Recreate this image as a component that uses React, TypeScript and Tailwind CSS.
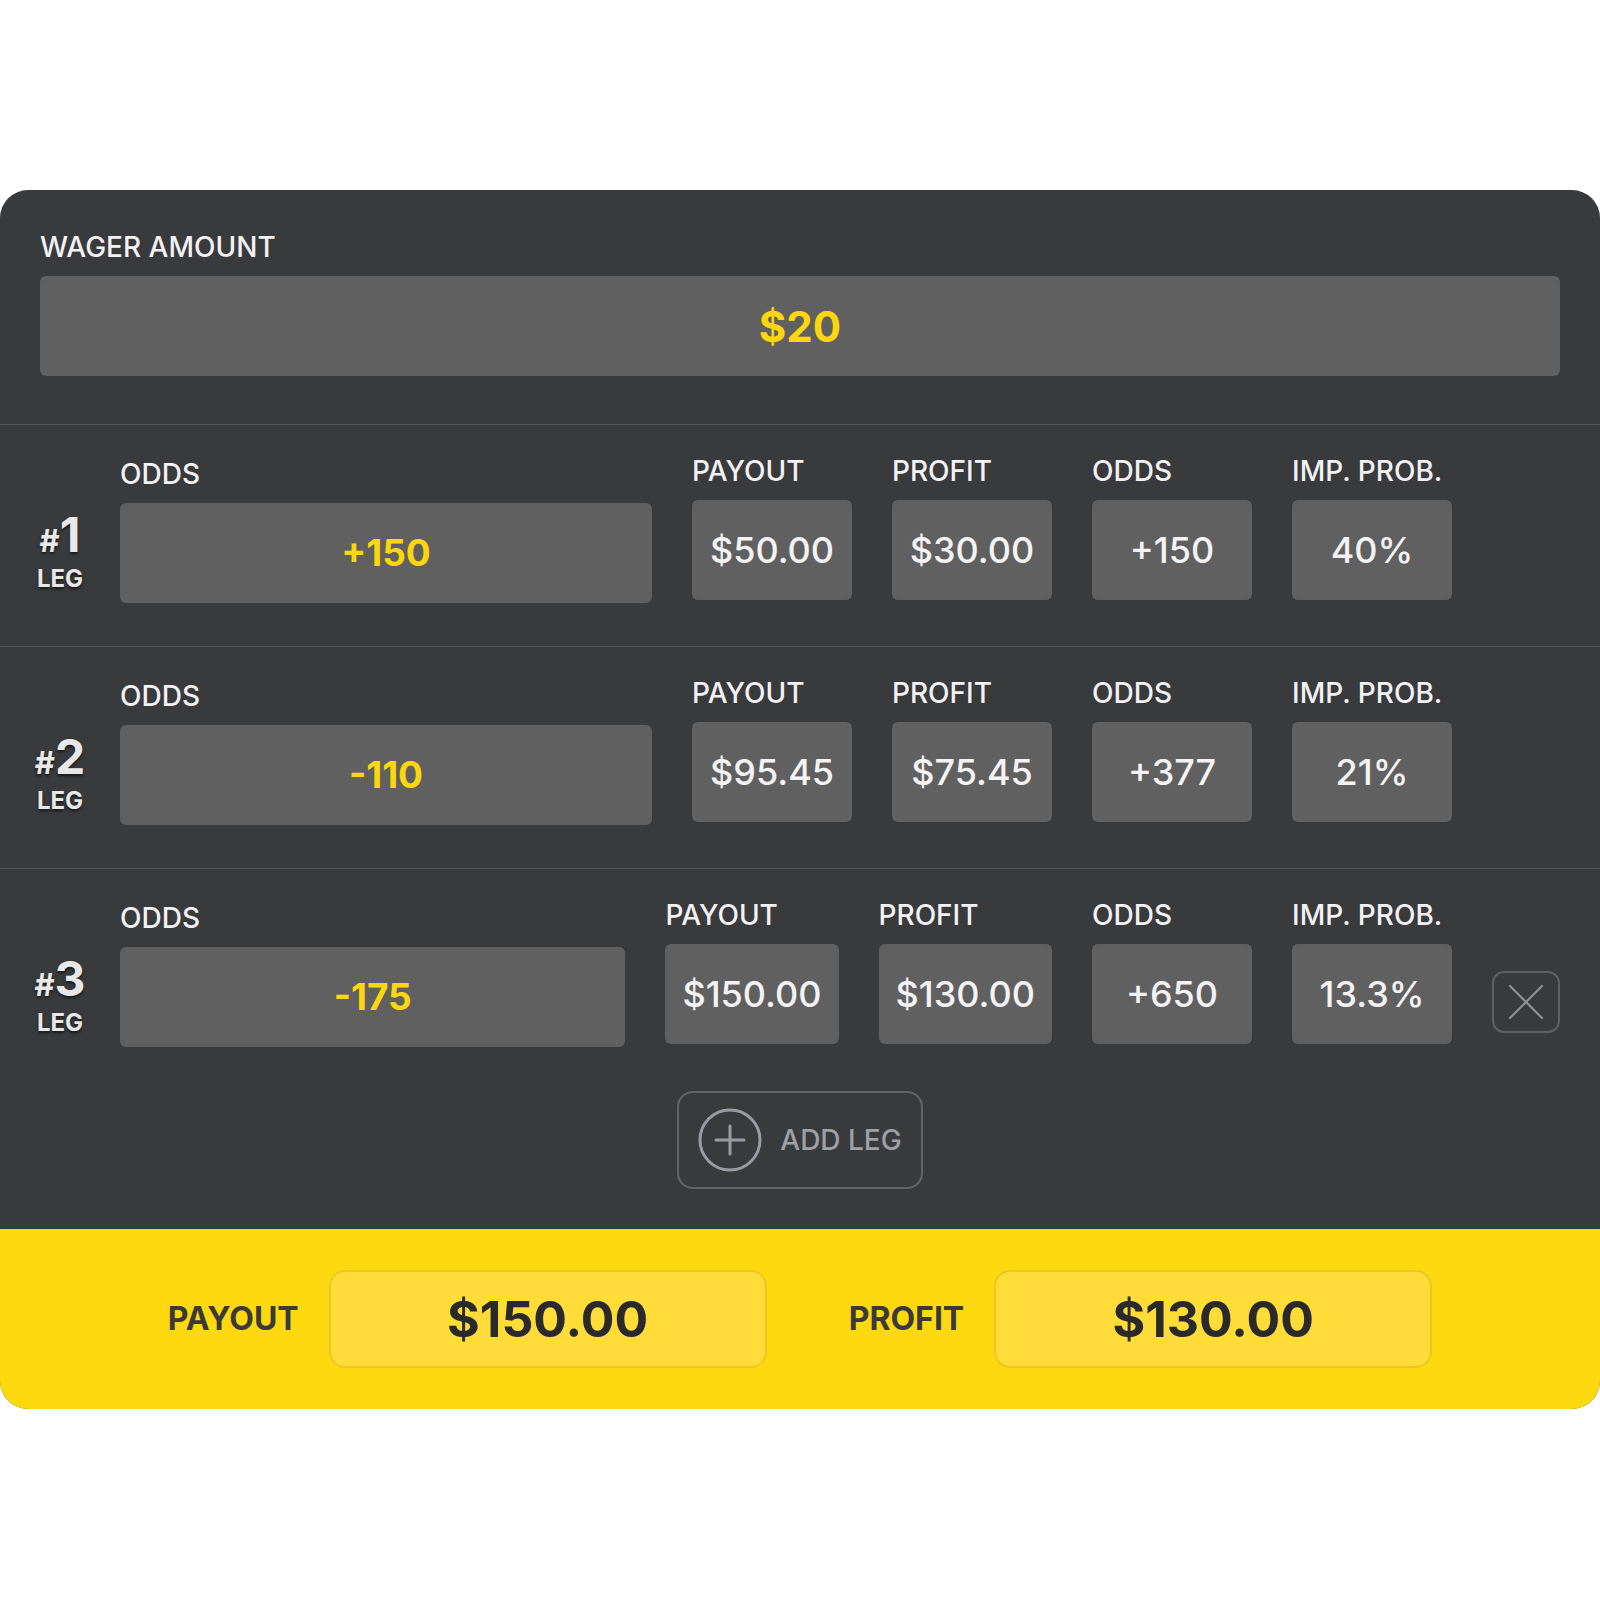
import React from "react";

type Leg = {
  n: number;
  odds: string;
  payout: string;
  profit: string;
  american: string;
  prob: string;
  removable?: boolean;
};

const legs: Leg[] = [
  { n: 1, odds: "+150", payout: "$50.00", profit: "$30.00", american: "+150", prob: "40%" },
  { n: 2, odds: "-110", payout: "$95.45", profit: "$75.45", american: "+377", prob: "21%" },
  { n: 3, odds: "-175", payout: "$150.00", profit: "$130.00", american: "+650", prob: "13.3%", removable: true },
];

function StatBox({ label, value }: { label: string; value: string }) {
  return (
    <div className="flex flex-col shrink-0">
      <div className="text-[28px] leading-[34px] font-medium text-[#f2f1f4]">{label}</div>
      <div className="mt-3 h-[100px] min-w-[160px] px-[17px] rounded-md bg-[#606060] flex items-center justify-center text-[36px] font-medium text-[#f3f2f5]">
        {value}
      </div>
    </div>
  );
}

function CloseIcon() {
  return (
    <svg width="36" height="34" viewBox="0 0 36 34" fill="none">
      <path d="M2 1L34 33M34 1L2 33" stroke="#8e9196" strokeWidth="2.2" strokeLinecap="round" />
    </svg>
  );
}

function PlusCircle() {
  return (
    <svg width="64" height="64" viewBox="0 0 64 64" fill="none">
      <circle cx="32" cy="32" r="30" stroke="#999da3" strokeWidth="3" />
      <path d="M32 18V46M18 32H46" stroke="#999da3" strokeWidth="3" strokeLinecap="round" />
    </svg>
  );
}

function LegRow({ leg, last }: { leg: Leg; last: boolean }) {
  return (
    <div
      className={
        "flex items-start gap-10 px-10 pt-[29px] " +
        (last ? "pb-[44px]" : "pb-[43px] border-b border-[#525356]")
      }
    >
      <div className="w-10 shrink-0 mt-[56px] flex flex-col items-center text-[#e8e8e8] [text-shadow:0_2px_3px_rgba(0,0,0,0.6)]">
        <div className="text-[48px] leading-[50px] font-bold whitespace-nowrap">
          <span className="text-[31px] leading-none">#</span>
          {leg.n}
        </div>
        <div className="mt-[7px] text-[24px] leading-[24px] font-bold">LEG</div>
      </div>

      <div className="flex-1 min-w-0 mt-[3px] flex flex-col">
        <div className="text-[28px] leading-[34px] font-medium text-[#f2f1f4]">ODDS</div>
        <div className="mt-3 h-[100px] rounded-md bg-[#606060] flex items-center justify-center text-[37px] font-bold text-[#fdd70e]">
          {leg.odds}
        </div>
      </div>

      <StatBox label="PAYOUT" value={leg.payout} />
      <StatBox label="PROFIT" value={leg.profit} />
      <StatBox label="ODDS" value={leg.american} />
      <StatBox label="IMP. PROB." value={leg.prob} />

      <div className="w-[68px] shrink-0">
        {leg.removable && (
          <button className="mt-[73px] w-[68px] h-[62px] rounded-xl border-2 border-[#5f6064] flex items-center justify-center">
            <CloseIcon />
          </button>
        )}
      </div>
    </div>
  );
}

export default function App() {
  return (
    <div className="min-h-[1600px] bg-white pt-[190px] [font-family:Inter,'Noto_Sans',sans-serif]">
      <div className="w-[1600px] rounded-[28px] overflow-hidden bg-[#393a3c]">
        <section className="px-10 pt-10 pb-12 border-b border-[#525356]">
          <div className="text-[28px] leading-[34px] font-medium text-[#f2f1f4]">WAGER AMOUNT</div>
          <div className="mt-3 h-[100px] rounded-md bg-[#606060] flex items-center justify-center text-[42px] font-bold text-[#fdd70e]">
            $20
          </div>
        </section>

        {legs.map((leg, i) => (
          <LegRow key={leg.n} leg={leg} last={i === legs.length - 1} />
        ))}

        <div className="flex justify-center pb-10">
          <button className="w-[246px] h-[98px] rounded-2xl border-2 border-[#636467] flex items-center justify-center gap-[18px]">
            <PlusCircle />
            <span className="text-[28px] leading-[34px] font-medium text-[#9da1a7]">ADD LEG</span>
          </button>
        </div>

        <footer className="h-[180px] bg-[#fed90f] flex items-center justify-center gap-[82px]">
          <div className="flex items-center gap-[30px]">
            <span className="text-[32px] font-bold text-[#3a3a3a]">PAYOUT</span>
            <div className="w-[438px] h-[98px] rounded-2xl border-2 border-[#ecc722] bg-[#ffdc37] flex items-center justify-center text-[50px] font-bold text-[#2a2a2a]">
              $150.00
            </div>
          </div>
          <div className="flex items-center gap-[30px]">
            <span className="text-[32px] font-bold text-[#3a3a3a]">PROFIT</span>
            <div className="w-[438px] h-[98px] rounded-2xl border-2 border-[#ecc722] bg-[#ffdc37] flex items-center justify-center text-[50px] font-bold text-[#2a2a2a]">
              $130.00
            </div>
          </div>
        </footer>
      </div>
    </div>
  );
}
